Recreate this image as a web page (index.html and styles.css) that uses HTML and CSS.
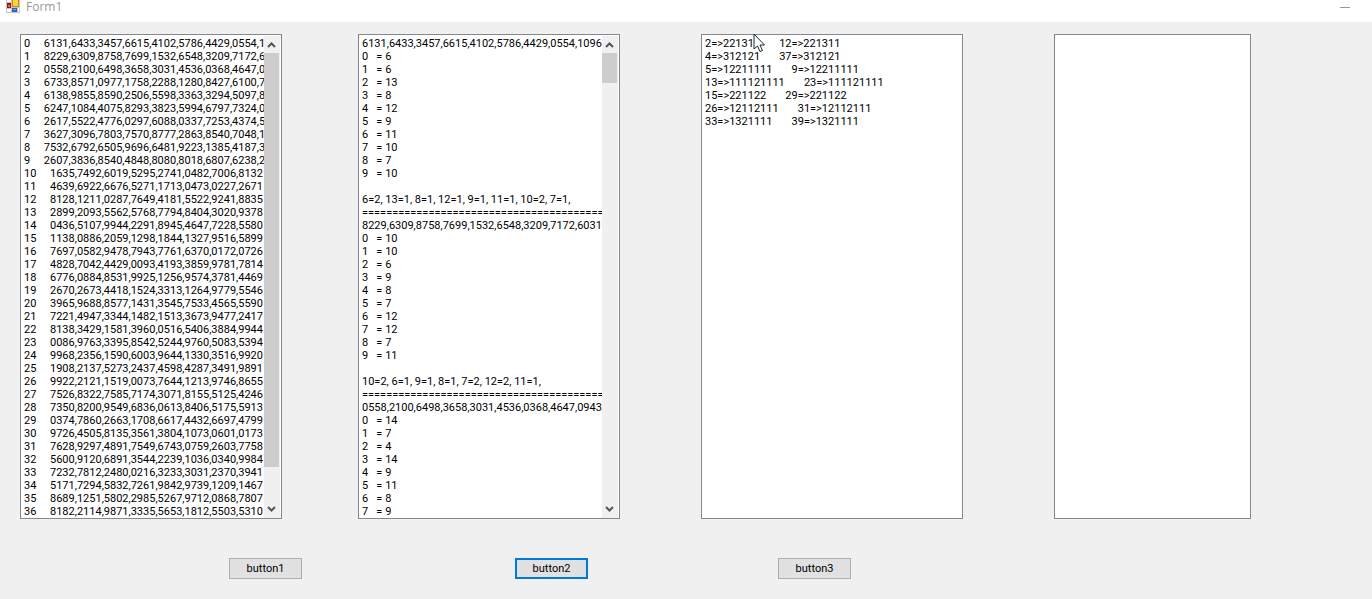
FILE: index.html
```html
<!DOCTYPE html>
<html lang="en">
<head>
    <meta charset="utf-8">
    <meta name="viewport" content="width=device-width, initial-scale=1">
    <title>Form1</title>
    <link rel="stylesheet" href="styles.css">
</head>
<body>
    <header class="titlebar">
        <svg class="app-icon" width="15" height="14" viewBox="0 0 15 14" aria-hidden="true">
            <path d="M0 0h14v13H0z" fill="#c4c4c4"/>
            <path d="M1 0h4v2H1zM1 9h4v3H1zM12 8h1v4h-1z" fill="#fff"/>
            <path d="M1 3h4v5H1z" fill="#a3140d"/>
            <path d="M2 5h2v2H2z" fill="#ef6a5c"/>
            <path d="M6 0h7v7H6z" fill="#c98a10"/>
            <path d="M7 0h5v6H7z" fill="#ffd040"/>
            <path d="M6 8h5v4H6z" fill="#2b62c9"/>
            <path d="M7 9h3v1H7z" fill="#79a9f5"/>
        </svg>
        <span class="title">Form1</span>
        <button class="minimize" type="button" aria-label="Minimize">
            <svg width="10" height="1" viewBox="0 0 10 1"><path d="M0 0h10v1H0z" fill="#999"/></svg>
        </button>
    </header>

    <main>
        <div class="boxes">
            <!-- source numbers -->
            <div class="box">
                <textarea class="lines" rows="37" wrap="off" spellcheck="false" aria-label="Numbers">
0     6131,6433,3457,6615,4102,5786,4429,0554,1096
1     8229,6309,8758,7699,1532,6548,3209,7172,6031
2     0558,2100,6498,3658,3031,4536,0368,4647,0943
3     6733,8571,0977,1758,2288,1280,8427,6100,7
4     6138,9855,8590,2506,5598,3363,3294,5097,8
5     6247,1084,4075,8293,3823,5994,6797,7324,0
6     2617,5522,4776,0297,6088,0337,7253,4374,5
7     3627,3096,7803,7570,8777,2863,8540,7048,1
8     7532,6792,6505,9696,6481,9223,1385,4187,3
9     2607,3836,8540,4848,8080,8018,6807,6238,2
10     1635,7492,6019,5295,2741,0482,7006,8132
11     4639,6922,6676,5271,1713,0473,0227,2671
12     8128,1211,0287,7649,4181,5522,9241,8835
13     2899,2093,5562,5768,7794,8404,3020,9378
14     0436,5107,9944,2291,8945,4647,7228,5580
15     1138,0886,2059,1298,1844,1327,9516,5899
16     7697,0582,9478,7943,7761,6370,0172,0726
17     4828,7042,4429,0093,4193,3859,9781,7814
18     6776,0884,8531,9925,1256,9574,3781,4469
19     2670,2673,4418,1524,3313,1264,9779,5546
20     3965,9688,8577,1431,3545,7533,4565,5590
21     7221,4947,3344,1482,1513,3673,9477,2417
22     8138,3429,1581,3960,0516,5406,3884,9944
23     0086,9763,3395,8542,5244,9760,5083,5394
24     9968,2356,1590,6003,9644,1330,3516,9920
25     1908,2137,5273,2437,4598,4287,3491,9891
26     9922,2121,1519,0073,7644,1213,9746,8655
27     7526,8322,7585,7174,3071,8155,5125,4246
28     7350,8200,9549,6836,0613,8406,5175,5913
29     0374,7860,2663,1708,6617,4432,6697,4799
30     9726,4505,8135,3561,3804,1073,0601,0173
31     7628,9297,4891,7549,6743,0759,2603,7758
32     5600,9120,6891,3544,2239,1036,0340,9984
33     7232,7812,2480,0216,3233,3031,2370,3941
34     5171,7294,5832,7261,9842,9739,1209,1467
35     8689,1251,5802,2985,5267,9712,0868,7807
36     8182,2114,9871,3335,5653,1812,5503,5310</textarea>
                <div class="scrollbar">
                    <svg class="arrow" width="15" height="17" viewBox="0 0 15 17"><path d="M4 11L7.500 7.500L11 11" fill="none" stroke="#555" stroke-width="2"/></svg>
                    <div class="track"><div class="thumb" style="height: 92.4%"></div></div>
                    <svg class="arrow" width="15" height="17" viewBox="0 0 15 17"><path d="M4 6L7.500 9.500L11 6" fill="none" stroke="#555" stroke-width="2"/></svg>
                </div>
            </div>

            <!-- digit counts -->
            <div class="box">
                <textarea class="lines" rows="37" wrap="off" spellcheck="false" aria-label="Digit counts">
6131,6433,3457,6615,4102,5786,4429,0554,1096
0   = 6
1   = 6
2   = 13
3   = 8
4   = 12
5   = 9
6   = 11
7   = 10
8   = 7
9   = 10

6=2, 13=1, 8=1, 12=1, 9=1, 11=1, 10=2, 7=1,
==========================================
8229,6309,8758,7699,1532,6548,3209,7172,6031
0   = 10
1   = 10
2   = 6
3   = 9
4   = 8
5   = 7
6   = 12
7   = 12
8   = 7
9   = 11

10=2, 6=1, 9=1, 8=1, 7=2, 12=2, 11=1,
==========================================
0558,2100,6498,3658,3031,4536,0368,4647,0943
0   = 14
1   = 7
2   = 4
3   = 14
4   = 9
5   = 11
6   = 8
7   = 9</textarea>
                <div class="scrollbar">
                    <svg class="arrow" width="15" height="17" viewBox="0 0 15 17"><path d="M4 11L7.500 7.500L11 11" fill="none" stroke="#555" stroke-width="2"/></svg>
                    <div class="track"><div class="thumb" style="height: 6.7%"></div></div>
                    <svg class="arrow" width="15" height="17" viewBox="0 0 15 17"><path d="M4 6L7.500 9.500L11 6" fill="none" stroke="#555" stroke-width="2"/></svg>
                </div>
            </div>

            <!-- matching pairs -->
            <div class="box">
                <textarea class="lines" rows="37" wrap="off" spellcheck="false" aria-label="Matches">
2=&gt;221311       12=&gt;221311
4=&gt;312121       37=&gt;312121
5=&gt;12211111       9=&gt;12211111
13=&gt;111121111       23=&gt;111121111
15=&gt;221122       29=&gt;221122
26=&gt;12112111       31=&gt;12112111
33=&gt;1321111       39=&gt;1321111</textarea>
                <svg class="pointer" width="14" height="20" viewBox="0 0 14 20" aria-hidden="true">
                    <path d="M1 1V16L4.500 13L7 18.500L9.500 17.500L7 12H11.500Z" fill="#fff" stroke="#223" stroke-width="1"/>
                </svg>
            </div>

            <div class="box">
                <textarea class="lines" rows="37" wrap="off" spellcheck="false" aria-label="Output"></textarea>
            </div>
        </div>

        <div class="buttons">
            <button class="btn" type="button">button1</button>
            <button class="btn focused" type="button">button2</button>
            <button class="btn" type="button">button3</button>
        </div>
    </main>
</body>
</html>
```
FILE: styles.css
```css
:root {
    --form:   #f0f0f0;
    --edge:   #828790;
    --thumb:  #cdcdcd;
    --accent: #0078d7;
}

* {
    box-sizing: border-box;
}

body {
    margin: 0;
    min-height: 100vh;
    overflow: hidden;
    background: var(--form);
    color: #000;
    font-family: Roboto, "Liberation Sans", sans-serif;
    font-size: 11px;
}

.titlebar {
    display: flex;
    align-items: flex-start;
    height: 22px;
    padding: 0 22px 0 6px;
    background: #fff;
}

.title {
    margin-left: 5px;
    color: #999;
    font-family: "Open Sans", "Noto Sans", sans-serif;
    font-size: 12px;
    line-height: 14px;
}

.minimize {
    display: flex;
    align-items: center;
    height: 14px;
    margin-left: auto;
    padding: 0;
    border: 0;
    background: none;
}

.boxes {
    display: grid;
    grid-template-columns: 262fr 76fr 262fr 81fr 262fr 91fr 197fr 121fr;
    padding: 12px 0 0 20px;
}

.box {
    position: relative;
    display: flex;
    min-width: 0;
    padding: 1px 1px 0;
    border: 1px solid var(--edge);
    background: #fff;
}

.box:nth-child(1) { grid-column: 1; }
.box:nth-child(2) { grid-column: 3; }
.box:nth-child(3) { grid-column: 5; }
.box:nth-child(4) { grid-column: 7; }

.lines {
    flex: 1;
    min-width: 0;
    margin: 0;
    padding: 1px 0 0 2px;
    border: 0;
    outline: 0;
    resize: none;
    overflow: hidden;
    background: none;
    color: inherit;
    font: inherit;
    line-height: 13px;
    white-space: pre;
}

.scrollbar {
    display: flex;
    flex-direction: column;
    width: 16px;
    background: var(--form);
}

.arrow {
    display: block;
    flex: none;
}

.track {
    flex: 1;
}

.thumb {
    width: 15px;
    background: var(--thumb);
}

/* mouse pointer over the third box */
.pointer {
    position: absolute;
    top: -2px;
    left: 51px;
}

.buttons {
    display: grid;
    grid-template-columns: 209fr 73px 213fr 73px 190fr 73px 521fr;
    padding: 39px 0 20px 20px;
}

.btn {
    height: 21px;
    padding: 0;
    border: 1px solid #adadad;
    background: #e1e1e1;
    color: #000;
    font: inherit;
}

.btn:nth-child(1) { grid-column: 2; }
.btn:nth-child(2) { grid-column: 4; }
.btn:nth-child(3) { grid-column: 6; }

.focused {
    border: 2px solid var(--accent);
}
```
